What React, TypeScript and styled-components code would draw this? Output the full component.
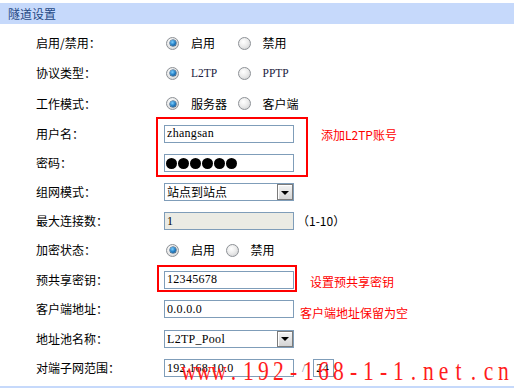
import React from 'react';
import styled, { createGlobalStyle } from 'styled-components';

const CJK = `"Noto Sans CJK SC", "Noto Sans CJK TC", sans-serif`;
const LATIN = `"Liberation Serif", "Noto Sans CJK SC", serif`;

const GlobalStyle = createGlobalStyle`
  html, body {
    margin: 0;
    padding: 0;
    background: #ffffff;
  }
  body {
    font-family: ${CJK};
    font-size: 12px;
    color: #000;
  }
`;

const Page = styled.div`
  position: relative;
  width: 514px;
  height: 388px;
  overflow: hidden;
  padding-top: 3px;
  box-sizing: border-box;
`;

const SectionBar = styled.div`
  height: 21px;
  background: #c6d9fb;
  padding-left: 8px;
  display: flex;
  align-items: center;
  font: 12px/16px ${CJK};
  color: #1f4884;
`;

const Form = styled.div`
  padding-top: 4px;
`;

const Row = styled.div<{ $h: number }>`
  display: flex;
  align-items: center;
  height: ${p => p.$h}px;
  padding-left: 36px;
`;

const Label = styled.div`
  width: 128px;
  flex: none;
  font: 12px/16px ${CJK};
  color: #000;
`;

const RadioGroup = styled.div`
  display: flex;
  align-items: center;
  padding-left: 2px;
`;

const RadioOption = styled.div<{ $w?: number }>`
  display: flex;
  align-items: center;
  width: ${p => (p.$w ? `${p.$w}px` : 'auto')};
`;

const RadioDot = styled.span<{ $on?: boolean }>`
  position: relative;
  width: 13px;
  height: 13px;
  box-sizing: border-box;
  border-radius: 50%;
  border: 1px solid #8d9196;
  background: radial-gradient(circle at 40% 35%, #ffffff 0%, #ececec 45%, #c9cbcd 100%);
  margin-right: 12px;
  flex: none;

  &::after {
    content: '';
    display: ${p => (p.$on ? 'block' : 'none')};
    position: absolute;
    left: 2.5px;
    top: 2.5px;
    width: 6px;
    height: 6px;
    border-radius: 50%;
    background: radial-gradient(circle at 40% 35%, #7fd0ff 0%, #1c78c0 55%, #0b3e6e 100%);
    box-shadow: 0 0 0 0.5px #0d3a63;
  }
`;

const OptionText = styled.span<{ $latin?: boolean }>`
  font: ${p => (p.$latin ? `11.5px/16px ${LATIN}` : `12px/16px ${CJK}`)};
  color: ${p => (p.$latin ? '#1a1a40' : '#000')};
`;

const TextBox = styled.input<{ $w?: number; $disabled?: boolean }>`
  width: ${p => p.$w ?? 130}px;
  height: 18px;
  box-sizing: border-box;
  margin: 0;
  padding: 0 0 0 2px;
  border: 1px solid #7f9db9;
  border-radius: 0;
  background: ${p => (p.$disabled ? '#ebebe4' : '#ffffff')};
  font: 12px/16px ${LATIN};
  letter-spacing: 0.3px;
  color: #000;
  outline: none;
  flex: none;
`;

const MaskBox = styled.div`
  width: 130px;
  height: 18px;
  box-sizing: border-box;
  border: 1px solid #7f9db9;
  padding-left: 1px;
  display: flex;
  align-items: center;
  gap: 1px;
  background: #fff;
`;

const MaskDot = styled.span`
  width: 11px;
  height: 11px;
  border-radius: 50%;
  background: #000;
`;

const SelectBox = styled.div<{ $latin?: boolean }>`
  width: 130px;
  height: 18px;
  box-sizing: border-box;
  border: 1px solid #7f9db9;
  display: flex;
  align-items: center;
  justify-content: space-between;
  padding-left: 2px;
  background: #fff;
  font: ${p => (p.$latin ? `12px/16px ${LATIN}` : `12px/16px ${CJK}`)};
  letter-spacing: ${p => (p.$latin ? '0.3px' : '0')};
`;

const DropButton = styled.span`
  width: 16px;
  height: 16px;
  box-sizing: border-box;
  border: 1px solid #7b7b7b;
  box-shadow: inset 1px 1px 0 #ffffff;
  background: linear-gradient(#f4f4f4, #d4d4d4);
  display: flex;
  align-items: center;
  justify-content: center;

  &::before {
    content: '';
    width: 0;
    height: 0;
    border-left: 4px solid transparent;
    border-right: 4px solid transparent;
    border-top: 4px solid #000;
    margin-top: 1px;
  }
`;

const Hint = styled.span`
  margin-left: 3px;
  font: 12px/16px ${CJK};
  color: #000;
`;

const Slash = styled.span`
  margin: 0 8px 0 8px;
  font: 12px/16px ${LATIN};
  color: #7a8aa0;
`;

const Note = styled.span<{ $gap: number; $dy?: number }>`
  margin-left: ${p => p.$gap}px;
  margin-top: ${p => p.$dy ?? 0}px;
  font: 12px/16px ${CJK};
  color: #ff0000;
  white-space: nowrap;
`;

const RedFrame = styled.div<{ $x: number; $y: number; $w: number; $h: number }>`
  position: absolute;
  left: ${p => p.$x}px;
  top: ${p => p.$y}px;
  width: ${p => p.$w}px;
  height: ${p => p.$h}px;
  box-sizing: border-box;
  border: 2px solid #ff0000;
  pointer-events: none;
`;

const Watermark = styled.div`
  position: absolute;
  left: 181px;
  top: 357px;
  display: flex;
  font: 27px/28px "Liberation Serif", "DejaVu Serif", serif;
  color: #ff1c1c;
  white-space: nowrap;
  transform: scaleX(0.8);
  transform-origin: left center;
  pointer-events: none;
`;

const MarkCell = styled.span`
  display: inline-block;
  width: 18.75px;
  text-align: center;
`;

const FooterBar = styled.div`
  margin-top: 3px;
  height: 2px;
  background: #c6d9fb;
`;

const WATERMARK = 'www.192-168-1-1.net.cn';

const App: React.FC = () => {
  return (
    <Page>
      <GlobalStyle />
      <SectionBar>隧道设置</SectionBar>
      <Form>
        <Row $h={30}>
          <Label>启用/禁用：</Label>
          <RadioGroup>
            <RadioOption $w={71.5}>
              <RadioDot $on />
              <OptionText>启用</OptionText>
            </RadioOption>
            <RadioOption>
              <RadioDot />
              <OptionText>禁用</OptionText>
            </RadioOption>
          </RadioGroup>
        </Row>
        <Row $h={30.5}>
          <Label>协议类型：</Label>
          <RadioGroup>
            <RadioOption $w={71.5}>
              <RadioDot $on />
              <OptionText $latin>L2TP</OptionText>
            </RadioOption>
            <RadioOption>
              <RadioDot />
              <OptionText $latin>PPTP</OptionText>
            </RadioOption>
          </RadioGroup>
        </Row>
        <Row $h={30.5}>
          <Label>工作模式：</Label>
          <RadioGroup>
            <RadioOption $w={71.5}>
              <RadioDot $on />
              <OptionText>服务器</OptionText>
            </RadioOption>
            <RadioOption>
              <RadioDot />
              <OptionText>客户端</OptionText>
            </RadioOption>
          </RadioGroup>
        </Row>
        <Row $h={29.5}>
          <Label>用户名：</Label>
          <TextBox readOnly value="zhangsan" />
          <Note $gap={27} $dy={2}>添加L2TP账号</Note>
        </Row>
        <Row $h={29}>
          <Label>密码：</Label>
          <MaskBox>
            {Array.from({ length: 6 }).map((_, i) => (
              <MaskDot key={i} />
            ))}
          </MaskBox>
        </Row>
        <Row $h={29}>
          <Label>组网模式：</Label>
          <SelectBox>
            <span>站点到站点</span>
            <DropButton />
          </SelectBox>
        </Row>
        <Row $h={29}>
          <Label>最大连接数：</Label>
          <TextBox readOnly $disabled value="1" />
          <Hint>（1-10）</Hint>
        </Row>
        <Row $h={29.5}>
          <Label>加密状态：</Label>
          <RadioGroup>
            <RadioOption $w={59.5}>
              <RadioDot $on />
              <OptionText>启用</OptionText>
            </RadioOption>
            <RadioOption>
              <RadioDot />
              <OptionText>禁用</OptionText>
            </RadioOption>
          </RadioGroup>
        </Row>
        <Row $h={29.5}>
          <Label>预共享密钥：</Label>
          <TextBox readOnly value="12345678" />
          <Note $gap={16} $dy={4}>设置预共享密钥</Note>
        </Row>
        <Row $h={29.5}>
          <Label>客户端地址：</Label>
          <TextBox readOnly value="0.0.0.0" />
          <Note $gap={6} $dy={7}>客户端地址保留为空</Note>
        </Row>
        <Row $h={29}>
          <Label>地址池名称：</Label>
          <SelectBox $latin>
            <span>L2TP_Pool</span>
            <DropButton />
          </SelectBox>
        </Row>
        <Row $h={30}>
          <Label>对端子网范围：</Label>
          <TextBox readOnly value="192.168.10.0" />
          <Slash>/</Slash>
          <TextBox readOnly $w={21} value="24" />
        </Row>
      </Form>
      <FooterBar />
      <RedFrame $x={156} $y={117} $w={152} $h={60} />
      <RedFrame $x={157} $y={265} $w={140} $h={27} />
      <Watermark>
        {WATERMARK.split('').map((ch, i) => (
          <MarkCell key={i}>{ch}</MarkCell>
        ))}
      </Watermark>
    </Page>
  );
};

export default App;
